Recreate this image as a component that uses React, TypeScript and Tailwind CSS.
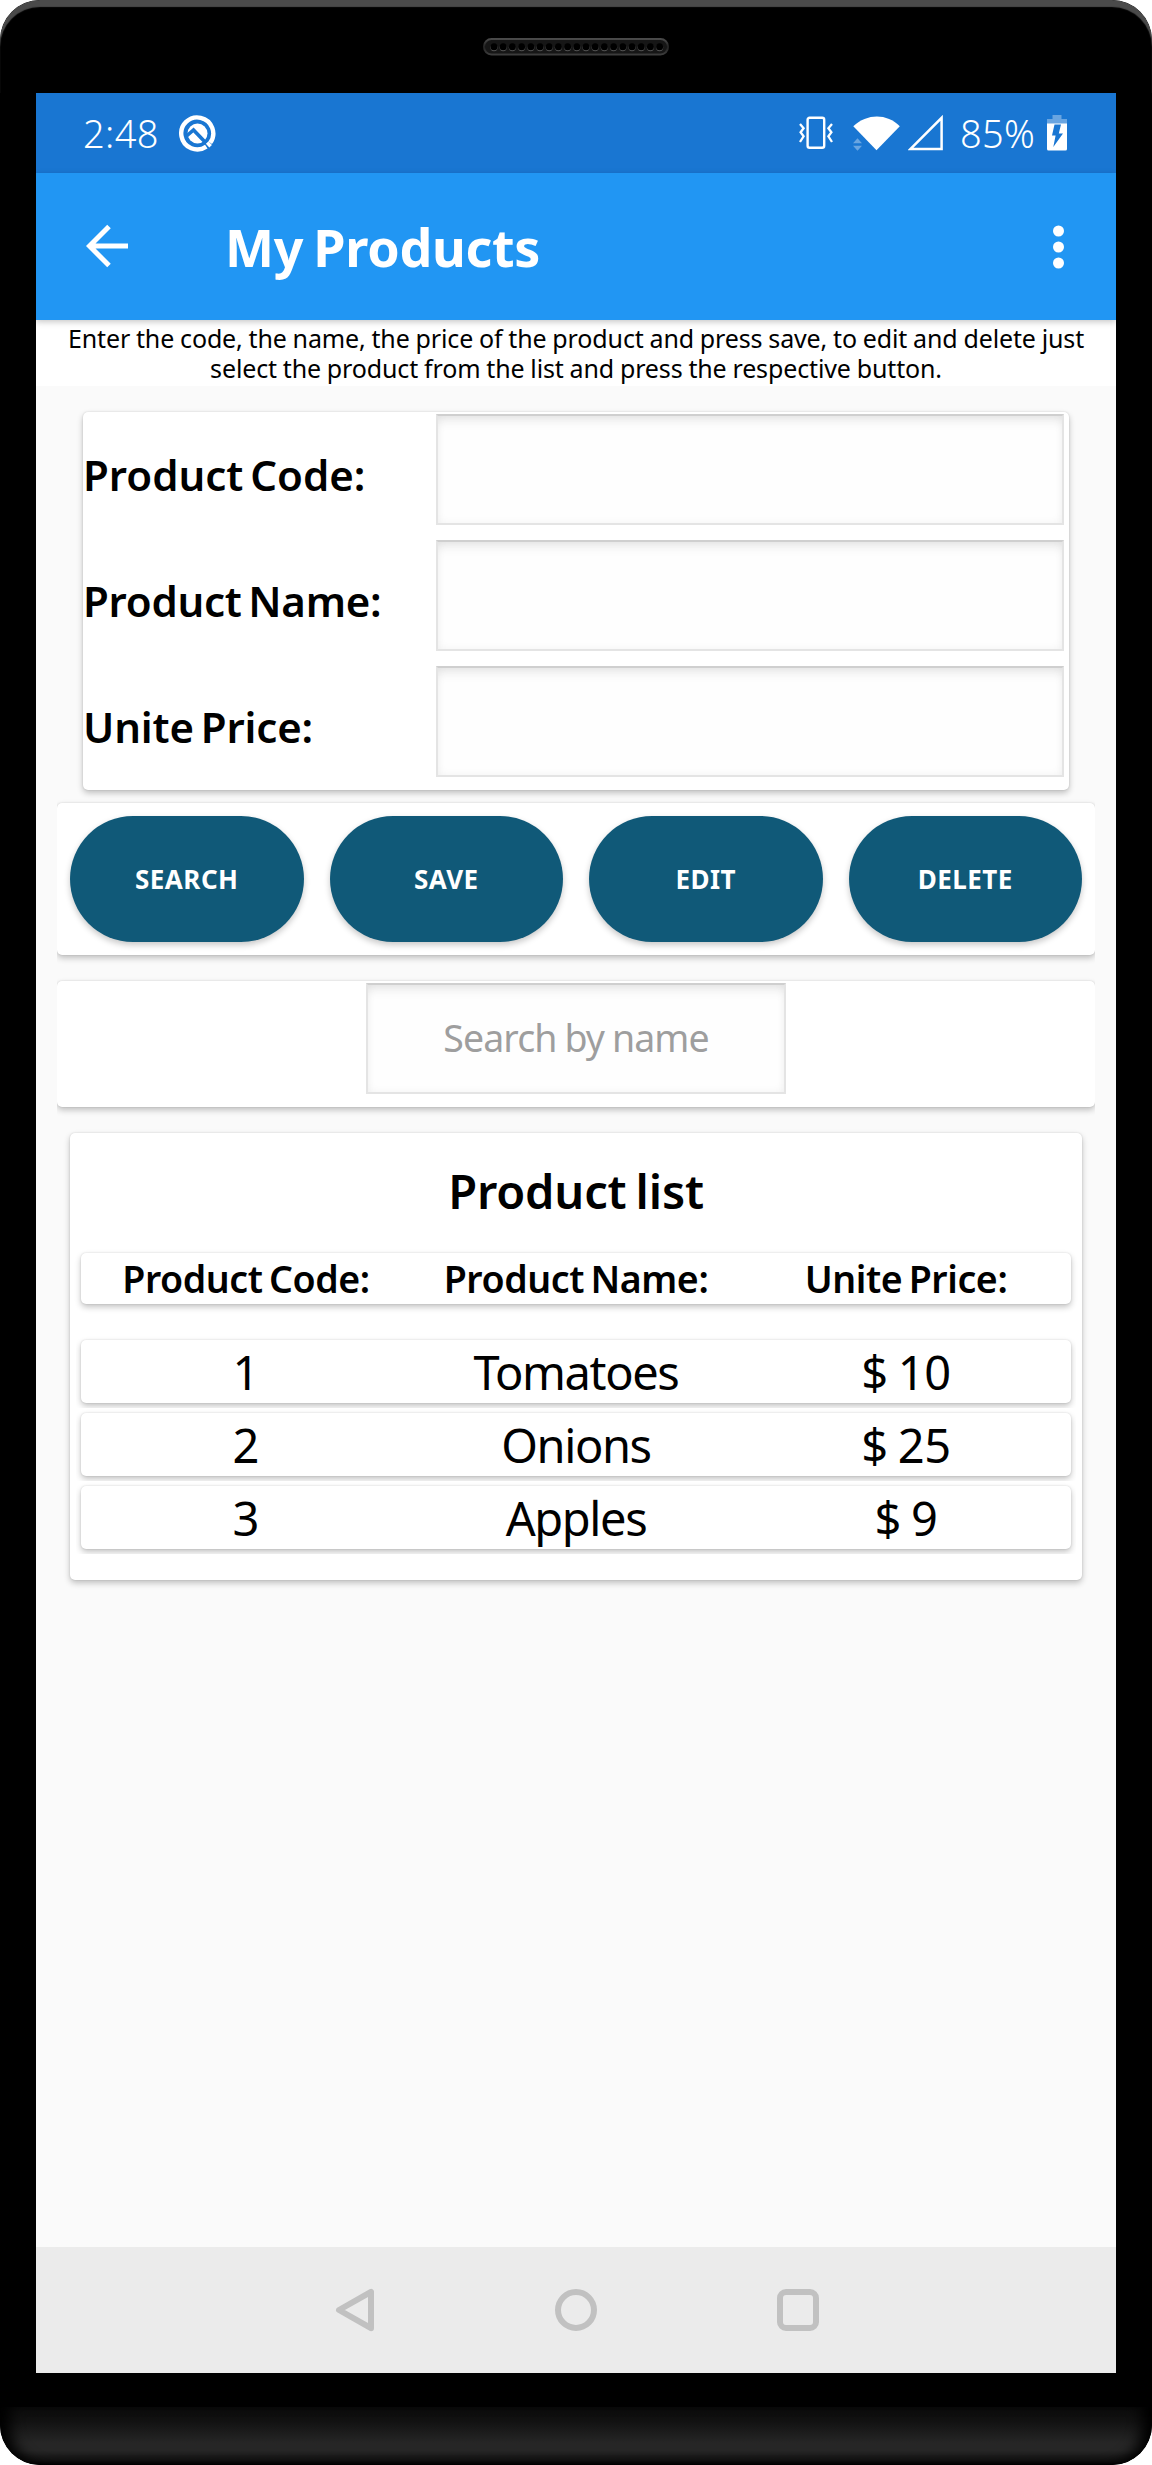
import React from "react";

const products = [
  { code: "1", name: "Tomatoes", price: "$ 10" },
  { code: "2", name: "Onions", price: "$ 25" },
  { code: "3", name: "Apples", price: "$ 9" },
];

const cardShadow = "shadow-[0_3px_6px_rgba(0,0,0,0.24),0_0_2px_rgba(0,0,0,0.14)]";

const fieldStyle =
  "border-2 border-[#e4e4e4] border-t-[#cfcfcf] bg-[#fefefe] shadow-[inset_0_9px_12px_-5px_rgba(0,0,0,0.09),inset_0_0_9px_rgba(0,0,0,0.05)] outline-none";

function Speaker() {
  return (
    <svg className="block" width="186" height="18" viewBox="0 0 186 18">
      <defs>
        <linearGradient id="grille" x1="0" y1="0" x2="0" y2="1">
          <stop offset="0" stopColor="#4a4a4a" />
          <stop offset="0.5" stopColor="#222" />
          <stop offset="1" stopColor="#3c3c3c" />
        </linearGradient>
      </defs>
      <rect x="1" y="1" width="184" height="15.5" rx="7.5" fill="#161616" stroke="url(#grille)" strokeWidth="2" />
      {Array.from({ length: 19 }, (_, i) => (
        <g key={i}>
          <circle cx={11 + i * 9.2} cy="9.6" r="3.6" fill="#555" />
          <circle cx={11 + i * 9.2} cy="8.8" r="3.5" fill="#000" />
        </g>
      ))}
    </svg>
  );
}

function StatusBar() {
  return (
    <div className="flex h-20 items-center bg-[#1976d2] pl-[47px] pr-[49px] text-white">
      <span className="w-[96px] whitespace-nowrap text-[38px] font-light leading-none tracking-[0.4px]">2:48</span>
      <svg className="block shrink-0" width="37" height="37" viewBox="0 0 37 37" fill="none">
        <path d="M27.3 31.6A16 16 0 1 1 31.2 27.8" stroke="#fff" strokeWidth="4.4" />
        <path d="M28.2 27.6l3.4 3.6" stroke="#fff" strokeWidth="3.6" />
        <circle cx="18.5" cy="18.5" r="10" fill="#fff" />
        <path d="M7 21.5L14.5 15L27 28" stroke="#1976d2" strokeWidth="3.6" />
      </svg>
      <div className="ml-auto flex items-center">
        <svg className="block" width="36" height="34" viewBox="0 0 36 34" fill="none" stroke="#fff" strokeWidth="2.4">
          <rect x="9.6" y="1.8" width="16.6" height="30" rx="2" />
          <path d="M2 8l3.6 4.3-3 4 3 4L2 26M34 8l-3.6 4.3 3 4-3 4L34 26" strokeWidth="2.3" />
        </svg>
        <svg className="ml-[19px] block" width="48" height="36" viewBox="0 0 48 36" fill="#fff">
          <path d="M.3 11.3C14-1.8 34-1.8 46.8 11.3L23.5 35.2z" />
          <path d="M0 28.3l4.5-5 4.5 5zM0 30.8h9l-4.5 5z" opacity="0.35" />
        </svg>
        <svg className="ml-[7px] block" width="36" height="36" viewBox="0 0 36 36" fill="none">
          <path d="M2.6 33.9L33.6 2.8V33.9z" stroke="#fff" strokeWidth="2.5" />
        </svg>
        <span className="ml-[16px] w-[87px] whitespace-nowrap text-[38px] font-light leading-none tracking-[0.3px]">85%</span>
        <svg className="block" width="20" height="36" viewBox="0 0 20 36">
          <path d="M5.5 0h9v4H20v5H0V4h5.5z" fill="#fff" opacity="0.35" />
          <path d="M0 8.5h20V34a1.5 1.5 0 0 1-1.5 1.5h-17A1.5 1.5 0 0 1 0 34z" fill="#fff" />
          <path d="M7.5 9.5h6.5l-2.2 9H16L6.3 32l2.3-11.5H5z" fill="#1976d2" />
        </svg>
      </div>
    </div>
  );
}

function AppBar() {
  return (
    <header className="relative z-10 flex h-[147px] items-center bg-[#2196f3] pl-[50px] pr-[52px] text-white shadow-[0_2px_6px_rgba(0,0,0,0.22)]">
      <svg className="mb-0.5 block" width="43" height="44" viewBox="0 0 43 44" fill="none" stroke="#fff" strokeWidth="5">
        <path d="M23 2.5L3.5 22 23 41.5M3.5 22H42" />
      </svg>
      <h1 className="ml-[96px] whitespace-nowrap text-[52px] font-bold leading-none tracking-[-0.3px] [word-spacing:-3px]">My Products</h1>
      <svg className="ml-auto block" width="11" height="44" viewBox="0 0 11 44" fill="#fff">
        <circle cx="5.5" cy="6" r="5.5" />
        <circle cx="5.5" cy="22" r="5.5" />
        <circle cx="5.5" cy="38" r="5.5" />
      </svg>
    </header>
  );
}

function Field({ label, spacing }: { label: string; spacing: string }) {
  return (
    <label className="flex h-[126px] items-center">
      <span className={`w-[353px] whitespace-nowrap text-[42px] font-semibold leading-none [word-spacing:-4px] ${spacing}`}>{label}</span>
      <input className={`mb-[12px] h-[111px] w-[628px] ${fieldStyle}`} />
    </label>
  );
}

function ActionButton({ label }: { label: string }) {
  return (
    <button className="h-[126px] flex-1 rounded-[63px] bg-[#105978] text-[26px] font-bold leading-none tracking-[0.5px] text-white shadow-[0_3px_6px_rgba(0,0,0,0.22)]">
      {label}
    </button>
  );
}

function NavBar() {
  return (
    <nav className="flex h-[126px] items-center justify-center bg-[#ebebeb]">
      <svg className="mr-[180px] block" width="41" height="44" viewBox="0 0 41 44" fill="none" stroke="#c1c1c1" strokeWidth="6" strokeLinejoin="round">
        <path d="M37 3.8V40.2L5 22z" />
      </svg>
      <svg className="block" width="42" height="42" viewBox="0 0 42 42" fill="none" stroke="#c1c1c1" strokeWidth="6">
        <circle cx="21" cy="21" r="18" />
      </svg>
      <svg className="ml-[180px] mr-[-1px] block" width="42" height="42" viewBox="0 0 42 42" fill="none" stroke="#c1c1c1" strokeWidth="6">
        <rect x="3" y="3" width="36" height="36" rx="6" />
      </svg>
    </nav>
  );
}

export default function App() {
  return (
    <div className="h-[2465px] w-[1152px] bg-white">
      <div className="flex h-full flex-col overflow-hidden rounded-[40px] bg-black font-['Noto_Sans',sans-serif] text-black">
        <div className="flex h-[93px] shrink-0 justify-center rounded-t-[40px] pt-[38px] shadow-[inset_0_7px_1px_#4a4a4a]">
          <Speaker />
        </div>

        <div className="mx-[36px] flex h-[2280px] shrink-0 flex-col overflow-hidden bg-[#fafafa]">
          <StatusBar />
          <AppBar />

          <p className="h-[66px] shrink-0 whitespace-nowrap bg-white pt-[3px] text-center text-[25px] leading-[30px] tracking-[-0.13px] [word-spacing:-0.5px]">
            Enter the code, the name, the price of the product and press save, to edit and delete just
            <br />
            select the product from the list and press the respective button.
          </p>

          <section className={`ml-[47px] mt-[26px] h-[378px] w-[986px] rounded-[5px] bg-white ${cardShadow}`}>
            <Field label="Product Code:" spacing="tracking-normal" />
            <Field label="Product Name:" spacing="tracking-[-0.25px]" />
            <Field label="Unite Price:" spacing="tracking-[-0.15px]" />
          </section>

          <div className="mx-[21px] mt-[13px] [clip-path:inset(-10px_0)]">
            <div className={`flex h-[152px] items-center gap-[26px] rounded-[5px] bg-white px-[13px] ${cardShadow}`}>
              <ActionButton label="SEARCH" />
              <ActionButton label="SAVE" />
              <ActionButton label="EDIT" />
              <ActionButton label="DELETE" />
            </div>
          </div>

          <div className="mx-[21px] mt-[26px] [clip-path:inset(-10px_0)]">
            <div className={`flex h-[126px] justify-center rounded-[5px] bg-white pt-[2px] ${cardShadow}`}>
              <input
                placeholder="Search by name"
                className={`h-[111px] w-[420px] pb-0.5 text-center text-[37.5px] tracking-[-0.9px] [word-spacing:-1px] placeholder:text-[#9e9e9e] ${fieldStyle}`}
              />
            </div>
          </div>

          <section className={`mx-[34px] mt-[26px] h-[447px] rounded-[5px] bg-white px-[11px] ${cardShadow}`}>
            <h2 className="flex h-[116px] items-center justify-center text-[47px] font-semibold leading-none tracking-[-0.15px] [word-spacing:-3px]">
              Product list
            </h2>
            <div className={`mt-1 grid h-[51px] grid-cols-3 items-center rounded-[5px] bg-white text-center text-[37.5px] font-semibold leading-none tracking-[-0.4px] [word-spacing:-3px] ${cardShadow}`}>
              <span>Product Code:</span>
              <span>Product Name:</span>
              <span>Unite Price:</span>
            </div>
            <div className="mt-[36px] flex flex-col gap-[10px]">
              {products.map((p) => (
                <div key={p.code} className="[clip-path:inset(-5px)]">
                  <div className={`grid h-[63px] grid-cols-3 items-center rounded-[5px] bg-white pt-[2px] text-center text-[47px] leading-none ${cardShadow}`}>
                    <span>{p.code}</span>
                    <span className="tracking-[-1.4px]">{p.name}</span>
                    <span className="tracking-[-0.3px] [word-spacing:-2px]">{p.price}</span>
                  </div>
                </div>
              ))}
            </div>
          </section>

          <div className="mt-auto">
            <NavBar />
          </div>
        </div>

        <div className="mt-auto h-[58px] shrink-0 rounded-b-[40px] bg-[linear-gradient(to_bottom,#0c0c0c,#121212_25%,#262626_62%,#262626_75%,#101010_94%,#000)] shadow-[inset_16px_0_14px_-6px_#000,inset_-16px_0_14px_-6px_#000]" />
      </div>
    </div>
  );
}
